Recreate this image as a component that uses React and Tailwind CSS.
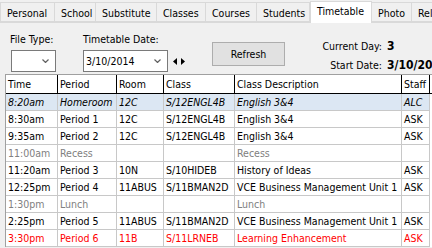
import React from 'react';

const tabs = [
  { label: 'Personal', w: 55 },
  { label: 'School', w: 42 },
  { label: 'Substitute', w: 62 },
  { label: 'Classes', w: 50 },
  { label: 'Courses', w: 52 },
  { label: 'Students', w: 54 },
  { label: 'Timetable', w: 62, active: true },
  { label: 'Photo', w: 41 },
  { label: 'Relationships', w: 60 },
];

const rows = [
  { time: '8:20am', period: 'Homeroom', room: '12C', cls: 'S/12ENGL4B', desc: 'English 3&4', staff: 'ALC', kind: 'current' },
  { time: '8:30am', period: 'Period 1', room: '12C', cls: 'S/12ENGL4B', desc: 'English 3&4', staff: 'ASK' },
  { time: '9:35am', period: 'Period 2', room: '12C', cls: 'S/12ENGL4B', desc: 'English 3&4', staff: 'ASK' },
  { time: '11:00am', period: 'Recess', room: '', cls: '', desc: 'Recess', staff: '', kind: 'break' },
  { time: '11:20am', period: 'Period 3', room: '10N', cls: 'S/10HIDEB', desc: 'History of Ideas', staff: 'ASK' },
  { time: '12:25pm', period: 'Period 4', room: '11ABUS', cls: 'S/11BMAN2D', desc: 'VCE Business Management Unit 1', staff: 'ASK' },
  { time: '1:30pm', period: 'Lunch', room: '', cls: '', desc: 'Lunch', staff: '', kind: 'break' },
  { time: '2:25pm', period: 'Period 5', room: '11ABUS', cls: 'S/11BMAN2D', desc: 'VCE Business Management Unit 1', staff: 'ASK' },
  { time: '3:30pm', period: 'Period 6', room: '11B', cls: 'S/11LRNEB', desc: 'Learning Enhancement', staff: 'ASK', kind: 'alert' },
];

const headers = ['Time', 'Period', 'Room', 'Class', 'Class Description', 'Staff'];

const Chevron = () => (
  <svg width="7" height="4" viewBox="0 0 7 4" className="text-[#606060]">
    <path d="M0.5 0.5 L3.5 3.5 L6.5 0.5" fill="none" stroke="currentColor" strokeWidth="1.2" />
  </svg>
);

const DateArrows = () => (
  <svg width="12" height="7" viewBox="0 0 12 7">
    <path d="M0 3.5 L4 0 L4 7 Z" fill="#000" />
    <path d="M12 3.5 L8 0 L8 7 Z" fill="#000" />
  </svg>
);

const rowStyle = (kind) => {
  if (kind === 'current') return 'bg-[#dce7f3] italic text-black';
  if (kind === 'break') return 'bg-white text-[#808080]';
  if (kind === 'alert') return 'bg-white text-[#ff0000]';
  return 'bg-white text-black';
};

export default function App() {
  return (
    <div className="w-[432px] h-[248px] overflow-hidden bg-[#f0f0f0] text-[10.5px] leading-[13px] text-black" style={{ fontFamily: 'Tahoma, "DejaVu Sans Condensed", "Liberation Sans", sans-serif' }}>
      {/* tab strip */}
      <div className="flex items-end h-[22px] bg-[#f0f0f0] whitespace-nowrap">
        {tabs.map((t) =>
          t.active ? (
            <div key={t.label} style={{ width: t.w }} className="shrink-0 h-[22px] bg-white border border-b-0 border-[#d9d9d9] px-[6px] pt-[3px] -mb-px relative z-10 overflow-hidden">
              {t.label}
            </div>
          ) : (
            <div key={t.label} style={{ width: t.w }} className="shrink-0 h-[20px] bg-[#f0f0f0] border border-[#d9d9d9] -ml-px first:ml-0 px-[6px] pt-[4px] overflow-hidden">
              {t.label}
            </div>
          )
        )}
      </div>

      {/* panel */}
      <div className="border-t border-[#d9d9d9] bg-[#f0f0f0]">
        <div className="flex h-[51px]">
          <div className="pl-[10px] pt-[10px] w-[83px] shrink-0">
            <div>File Type:</div>
            <div className="mt-[4px] ml-px w-[45px] h-[22px] bg-white border border-[#7a7a7a] flex items-center justify-end pr-[6px]">
              <Chevron />
            </div>
          </div>
          <div className="pt-[10px] w-[129px] shrink-0">
            <div>Timetable Date:</div>
            <div className="mt-[4px] flex items-center">
              <div className="w-[85px] h-[22px] bg-white border border-[#7a7a7a] flex items-center justify-between pl-[2px] pr-[6px]">
                <span>3/10/2014</span>
                <Chevron />
              </div>
              <div className="ml-[5px]"><DateArrows /></div>
            </div>
          </div>
          <div className="pt-[19px] shrink-0">
            <button className="w-[73px] h-[24px] bg-[#e1e1e1] border border-[#adadad] text-[10.5px]">Refresh</button>
          </div>
          <div className="pt-[17px] pl-[33px] grid grid-cols-[64px_auto] gap-x-[5px] gap-y-[3px] items-baseline whitespace-nowrap">
            <div className="text-right">Current Day:</div>
            <div className="font-bold text-[12px]">3</div>
            <div className="text-right">Start Date:</div>
            <div className="font-bold text-[12px]">3/10/2014</div>
          </div>
        </div>

        {/* grid */}
        <div className="ml-[5px] border-t border-l border-[#a0a0a0] bg-white">
          <div className="grid grid-cols-[52px_59px_47px_71px_167px_28px_20px] h-[19px] border-b border-black bg-white">
            {headers.map((h) => (
              <div key={h} className="border-r border-black pl-[2px] pt-[3px] overflow-hidden whitespace-nowrap">{h}</div>
            ))}
            <div />
          </div>
          {rows.map((r, i) => (
            <div key={i} className={`grid grid-cols-[52px_59px_47px_71px_167px_28px_20px] h-[17px] ${rowStyle(r.kind)}`}>
              {[r.time, r.period, r.room, r.cls, r.desc, r.staff].map((c, j) => (
                <div key={j} className="border-r border-b border-[#c8c8c8] pl-[2px] pt-[2px] overflow-hidden whitespace-nowrap">{c}</div>
              ))}
              <div className="bg-white" />
            </div>
          ))}
        </div>
      </div>
    </div>
  );
}
